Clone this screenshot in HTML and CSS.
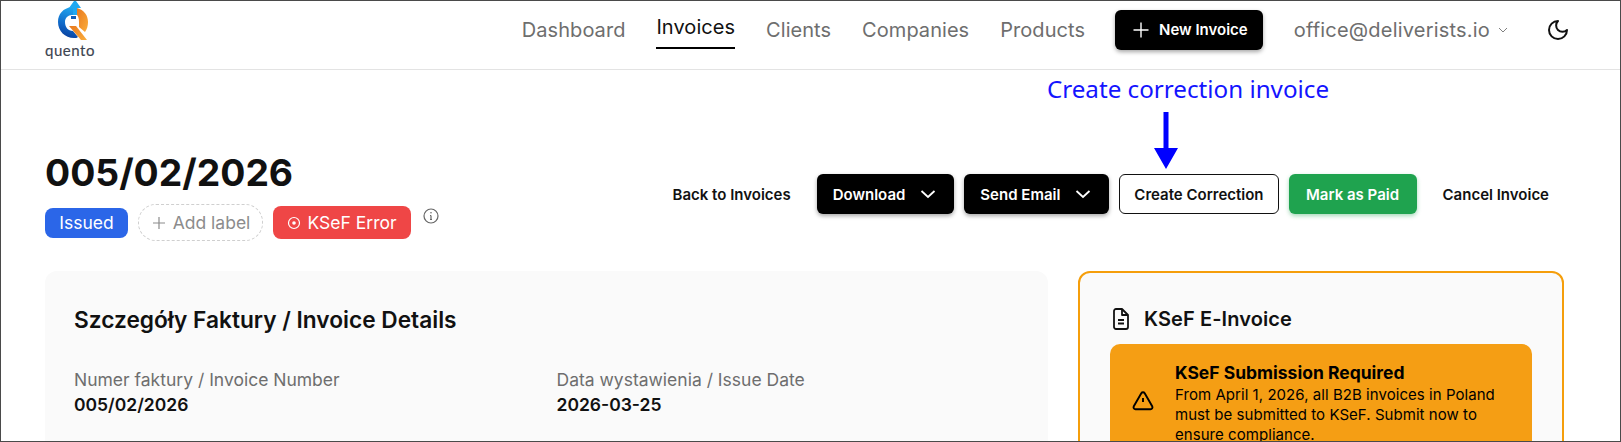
FILE: index.html
```html
<!DOCTYPE html>
<html lang="en">
<head>
<meta charset="utf-8">
<title>Invoice 005/02/2026</title>
<link rel="stylesheet" href="styles.css">
</head>
<body>
<header class="nav">
  <a class="logo">
    <svg class="logo-mark" width="32" height="40" viewBox="0 0 32 40">
      <defs>
        <linearGradient id="lb" x1="0.6" y1="0" x2="0.4" y2="1">
          <stop offset="0" stop-color="#1fa6ee"/>
          <stop offset="0.6" stop-color="#1068c8"/>
          <stop offset="1" stop-color="#0a3f9c"/>
        </linearGradient>
        <linearGradient id="lo" x1="0" y1="0" x2="1" y2="1">
          <stop offset="0" stop-color="#e8781e"/>
          <stop offset="1" stop-color="#fbae3c"/>
        </linearGradient>
      </defs>
      <path d="M18 6L15 6C6 7 1 13 1 21C1 30 8 37 17 37C19 37 20 37 21 36L16 30C11 30 8 26 8 21C8 17 11 14 15 14L18 14Z" fill="url(#lb)"/>
      <path d="M12 7L17 0H19L24 7H20V14H16V7Z" fill="#20a8f0"/>
      <path d="M20 7C27 9 31 14 31 21C31 25 30 28 28 31L22 26C22 24 22 22 22 21C22 17 21 15 20 14Z" fill="url(#lo)"/>
      <path d="M12 25L19 25L30 39L24 39Z" fill="url(#lo)"/>
      <path d="M14 15H19V18H14Z" fill="#0e5cb8"/>
    </svg>
    <span class="logo-text">quento</span>
  </a>
  <nav class="nav-links">
    <a class="nav-link">Dashboard</a>
    <a class="nav-link active">Invoices</a>
    <a class="nav-link">Clients</a>
    <a class="nav-link">Companies</a>
    <a class="nav-link">Products</a>
  </nav>
  <button class="btn btn-dark btn-new">
    <svg width="18" height="18" viewBox="0 0 18 18" fill="none" stroke="#fff" stroke-width="1.4"><path d="M9 1.500V16.500M1.500 9H16.500"/></svg>
    New Invoice
  </button>
  <div class="account">
    <span>office@deliverists.io</span>
    <svg width="10" height="6" viewBox="0 0 10 6" fill="none" stroke="#808080" stroke-width="1"><path d="M1 1L5 5L9 1"/></svg>
  </div>
  <svg class="moon" width="24" height="24" viewBox="0 0 24 24" fill="none" stroke="#111" stroke-width="2" stroke-linejoin="round"><path d="M12 3a6 6 0 0 0 9 9 9 9 0 1 1-9-9Z"/></svg>
</header>

<div class="note">
  <span class="note-text">Create correction invoice</span>
  <svg class="note-arrow" width="24" height="57" viewBox="0 0 24 57"><path d="M9.500 0H14.500V36H24L12 57L0 36H9.500Z" fill="#0000ff"/></svg>
</div>

<main class="page">
  <section class="head">
    <div class="head-left">
      <h1 class="title">005/02/2026</h1>
      <div class="badges">
        <span class="badge badge-blue">Issued</span>
        <span class="badge-add">
          <svg width="16" height="16" viewBox="0 0 16 16" fill="none" stroke="#8c8c8c" stroke-width="1.200"><path d="M8 2V14M2 8H14"/></svg>
          Add label
        </span>
        <span class="badge badge-red">
          <svg width="14" height="14" viewBox="0 0 14 14" fill="none" stroke="#fff" stroke-width="1.200"><circle cx="7" cy="7" r="5.500"/><circle cx="7" cy="7" r="1.800" fill="#fff" stroke="none"/></svg>
          KSeF Error
        </span>
        <svg class="info" width="16" height="16" viewBox="0 0 16 16" fill="none" stroke="#666" stroke-width="1.200"><circle cx="8" cy="8" r="7"/><path d="M8 7.500V11.500M7 7.500H8M7 11.500H9"/><circle cx="8" cy="4.800" r="0.800" fill="#666" stroke="none"/></svg>
      </div>
    </div>
    <div class="actions">
      <button class="btn btn-ghost btn-back">Back to Invoices</button>
      <button class="btn btn-dark btn-menu">Download
        <svg width="20" height="10" viewBox="0 0 20 10" fill="none" stroke="#fff" stroke-width="1.800"><path d="M3.500 2L10 8L16.500 2"/></svg>
      </button>
      <button class="btn btn-dark btn-menu">Send Email
        <svg width="20" height="10" viewBox="0 0 20 10" fill="none" stroke="#fff" stroke-width="1.800"><path d="M3.500 2L10 8L16.500 2"/></svg>
      </button>
      <button class="btn btn-outline">Create Correction</button>
      <button class="btn btn-green">Mark as Paid</button>
      <button class="btn btn-ghost">Cancel Invoice</button>
    </div>
  </section>

  <section class="columns">
    <article class="card">
      <h2 class="card-title">Szczegóły Faktury / Invoice Details</h2>
      <dl class="fields">
        <div>
          <dt>Numer faktury / Invoice Number</dt>
          <dd>005/02/2026</dd>
        </div>
        <div>
          <dt>Data wystawienia / Issue Date</dt>
          <dd>2026-03-25</dd>
        </div>
      </dl>
    </article>
    <aside class="card card-ksef">
      <h2 class="ksef-title">
        <svg width="18" height="22" viewBox="0 0 18 22" fill="none" stroke="#111" stroke-width="1.800" stroke-linejoin="round"><path d="M2 3a2 2 0 0 1 2-2h6l6 6v12a2 2 0 0 1-2 2H4a2 2 0 0 1-2-2Z"/><path d="M10 1V7H16M6 12H12M6 15.500H12"/></svg>
        KSeF E-Invoice
      </h2>
      <div class="alert">
        <svg width="22" height="20" viewBox="0 0 22 20" fill="none" stroke="#000" stroke-width="1.900" stroke-linejoin="round"><path d="M9.300 2.200a2 2 0 0 1 3.400 0l7.500 13a2 2 0 0 1-1.700 3H3.500a2 2 0 0 1-1.700-3Z"/><path d="M11 7V11M11 14.500V14.600"/></svg>
        <div>
          <h3 class="alert-title">KSeF Submission Required</h3>
          <p class="alert-text">From April 1, 2026, all B2B invoices in Poland must be submitted to KSeF. Submit now to ensure compliance.</p>
        </div>
      </div>
    </aside>
  </section>
</main>
</body>
</html>
```

FILE: styles.css
```css
* { box-sizing: border-box; }
html, body { margin: 0; padding: 0; }
html { overflow: hidden; }
body {
  width: 1621px;
  height: 442px;
  overflow: hidden;
  position: relative;
  border: 1px solid #4a4a4a;
  background: #fff;
  font-family: Inter, "Liberation Sans", sans-serif;
  color: #111;
}

.nav {
  height: 69px;
  border-bottom: 1px solid #e3e3e3;
  display: flex;
  align-items: center;
  padding: 0 50px 11px 45px;
}
.logo {
  display: flex;
  flex-direction: column;
  align-items: center;
  align-self: flex-start;
  width: 48px;
  margin-right: auto;
}
.logo-mark { display: block; margin-left: 5px; }
.logo-text {
  font-family: Lato, sans-serif;
  font-size: 15px;
  font-weight: 400;
  -webkit-text-stroke: 0.15px #3d4450;
  line-height: 14px;
  letter-spacing: 0.5px;
  color: #3d4450;
  margin-top: 2px;
}
.nav-links { display: flex; align-items: center; gap: 31px; }
.nav-link {
  font-size: 20px;
  line-height: 28px;
  letter-spacing: 0.05px;
  color: #6e6e6e;
}
.nav-link.active {
  color: #111;
  padding-bottom: 6px;
  border-bottom: 2px solid #000;
  margin-bottom: -2px;
}

.btn {
  font-family: inherit;
  font-size: 15px;
  font-weight: 600;
  height: 40px;
  border-radius: 6px;
  border: 0;
  padding: 0 16px;
  display: inline-flex;
  align-items: center;
  white-space: nowrap;
}
.btn-dark {
  background: #000;
  color: #fff;
  box-shadow: 0 2px 4px rgba(0, 0, 0, 0.35);
}
.btn-new { margin-left: 30px; gap: 9px; padding: 0 15px 0 17px; }
.btn-ghost { background: transparent; color: #111; }
.btn-outline {
  background: #fff;
  color: #111;
  border: 1px solid #111;
  padding: 0 14px;
}
.btn-green {
  background: #1fa34f;
  color: #fff;
  padding: 0 17.500px;
  box-shadow: 0 2px 4px rgba(31, 163, 79, 0.4);
}

.account {
  margin-left: 31px;
  display: flex;
  align-items: center;
  gap: 8px;
  font-size: 20px;
  letter-spacing: 0.2px;
  color: #6e6e6e;
}
.moon { margin-left: 38px; }

.note {
  position: absolute;
  left: 1042px;
  top: 71px;
  width: 290px;
  text-align: center;
}
.note-text {
  display: block;
  font-family: "Noto Sans", sans-serif;
  font-size: 24.200px;
  line-height: 34px;
  color: #1414ff;
}
.note-arrow { position: absolute; left: 111px; top: 40px; }

.page { padding: 0 55px 0 44px; }
.head {
  display: flex;
  justify-content: space-between;
  align-items: flex-start;
  padding-top: 80px;
  height: 201px;
}
.title {
  margin: 0;
  font-size: 37.300px;
  font-weight: 700;
  line-height: 46px;
  color: #111;
}
.badges {
  display: flex;
  align-items: center;
  gap: 10px;
  margin-top: 8px;
  height: 37px;
}
.badge {
  display: inline-flex;
  align-items: center;
  justify-content: center;
  border-radius: 8px;
  color: #fff;
  font-size: 17.500px;
}
.badge-blue { background: #2b66e8; width: 83px; height: 30px; }
.badge-red { background: #ef4646; width: 138px; height: 33px; gap: 6px; }
.badge-add {
  width: 125px;
  height: 37px;
  border: 1px dashed #cfcfcf;
  border-radius: 18px;
  display: inline-flex;
  align-items: center;
  justify-content: center;
  gap: 6px;
  color: #8c8c8c;
  font-size: 17.500px;
}
.info { margin: -14px 0 0 2px; }

.actions {
  display: flex;
  align-items: center;
  gap: 10px;
  margin-top: 24px;
}
.btn-menu { gap: 13px; }

.columns {
  display: grid;
  grid-template-columns: 1003px 486px;
  gap: 30px;
  height: 170px;
  overflow: hidden;
}
.card {
  background: #fafafa;
  border-radius: 12px;
  height: 220px;
  padding: 35px 29px;
}
.card-title {
  margin: 0;
  font-size: 22.700px;
  font-weight: 600;
  line-height: 28px;
  color: #111;
}
.fields {
  display: grid;
  grid-template-columns: 1fr 1fr;
  gap: 20px;
  margin: 34px 0 0;
}
.fields dt { font-size: 17.500px; line-height: 24px; color: #6e6e6e; }
.fields dd {
  margin: 0;
  font-size: 17.500px;
  font-weight: 600;
  line-height: 25px;
  color: #111;
}

.card-ksef {
  border: 2px solid #f59e0b;
  padding: 32px 30px;
}
.ksef-title {
  margin: 0;
  display: flex;
  align-items: center;
  gap: 14px;
  padding-left: 2px;
  font-size: 20px;
  font-weight: 600;
  line-height: 28px;
  letter-spacing: 0.1px;
  color: #111;
}
.alert {
  margin-top: 11px;
  background: #f59e14;
  border-radius: 10px;
  padding: 17px 12px 17px 22px;
  display: flex;
  align-items: center;
  gap: 21px;
  color: #000;
}
.alert > svg { flex: none; margin-top: -4px; }
.alert-title {
  margin: 0;
  font-size: 17.500px;
  font-weight: 700;
  line-height: 23px;
}
.alert-text {
  margin: 1px 0 0;
  font-size: 15px;
  line-height: 20px;
  letter-spacing: 0.05px;
}
```
